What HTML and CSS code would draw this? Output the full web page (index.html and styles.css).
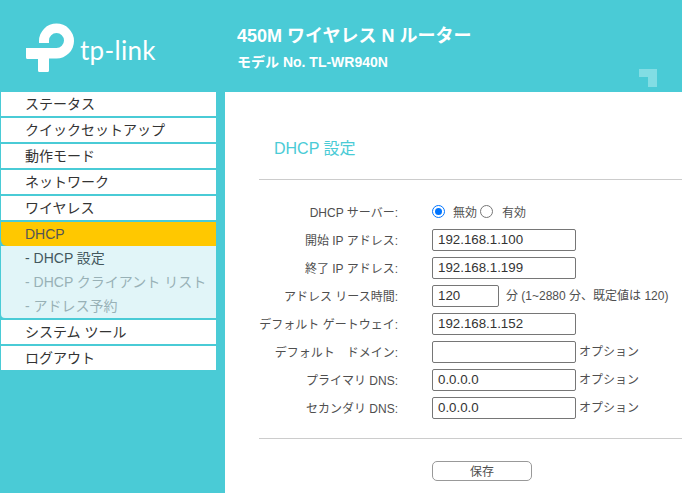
FILE: index.html
```html
<!DOCTYPE html>
<html lang="ja">
  <head>
    <meta charset="UTF-8" />
    <title>TL-WR940N</title>
    <link rel="stylesheet" href="styles.css">
  </head>

  <body>
    <header class="topbar">
      <div class="logo">
        <svg class="logo-mark" width="52" height="52" viewBox="25 22 52 52">
          <path fill="#fff" d="M39 43 V41 A17.500 17.500 0 1 1 56.500 58.500 H49 V70.500 Q49 72 47.500 72 H39.500 Q38 72 38 70.500 V59 H27.500 Q26 59 26 57.500 V48 H56.500 A7.500 7.500 0 1 0 49 40.500 V43 Z" />
        </svg>
        <span class="logo-text">tp-link</span>
      </div>
      <div class="model">
        <h1>450M ワイヤレス N ルーター</h1>
        <p>モデル No. TL-WR940N</p>
      </div>
      <svg class="corner" width="18" height="18" viewBox="0 0 18 18">
        <path fill="#82dde4" d="M0 0 H18 V18 H9 V8 H0 Z" />
      </svg>
    </header>

    <div class="page">
      <nav class="menu">
        <a class="item">ステータス</a>
        <a class="item">クイックセットアップ</a>
        <a class="item">動作モード</a>
        <a class="item">ネットワーク</a>
        <a class="item">ワイヤレス</a>
        <div class="group">
          <a class="item valgt">DHCP</a>
          <div class="sub">
            <a class="current">- DHCP 設定</a>
            <a>- DHCP クライアント リスト</a>
            <a>- アドレス予約</a>
          </div>
        </div>
        <a class="item">システム ツール</a>
        <a class="item">ログアウト</a>
      </nav>

      <main class="content">
        <h2>DHCP 設定</h2>
        <hr />
        <form class="settings">
          <div class="row">
            <label>DHCP サーバー:</label>
            <div class="radios">
              <span class="radio on"></span><span class="radio-label">無効</span>
              <span class="radio"></span><span class="radio-label second">有効</span>
            </div>
          </div>
          <div class="row">
            <label>開始 IP アドレス:</label>
            <div class="field">192.168.1.100</div>
          </div>
          <div class="row">
            <label>終了 IP アドレス:</label>
            <div class="field">192.168.1.199</div>
          </div>
          <div class="row">
            <label>アドレス リース時間:</label>
            <div class="field short">120</div>
            <span class="hint wide">分 (1~2880 分、既定値は 120)</span>
          </div>
          <div class="row">
            <label>デフォルト ゲートウェイ:</label>
            <div class="field">192.168.1.152</div>
          </div>
          <div class="row">
            <label>デフォルト　ドメイン:</label>
            <div class="field"></div>
            <span class="hint">オプション</span>
          </div>
          <div class="row">
            <label>プライマリ DNS:</label>
            <div class="field">0.0.0.0</div>
            <span class="hint">オプション</span>
          </div>
          <div class="row">
            <label>セカンダリ DNS:</label>
            <div class="field">0.0.0.0</div>
            <span class="hint">オプション</span>
          </div>
        </form>
        <hr class="bottom" />
        <div class="actions">
          <button type="button">保存</button>
        </div>
      </main>
    </div>
  </body>
</html>
```

FILE: styles.css
```css
html,
body {
  height: 100%;
}

body {
  margin: 0;
  background-color: #4acbd6;
  font-family: "Liberation Sans", "Noto Sans CJK JP", sans-serif;
  overflow: hidden;
}

.topbar {
  position: relative;
  display: flex;
  height: 92px;
}

.logo {
  display: flex;
  width: 237px;
  padding: 22px 0 0 25px;
  box-sizing: border-box;
}

.logo-text {
  margin: 12px 0 0 3px;
  height: 30px;
  color: #fff;
  font-family: "Lato", sans-serif;
  font-size: 26px;
  font-weight: 400;
  letter-spacing: 0.3px;
}

.model {
  color: #fff;
  font-weight: bold;
}

.model h1 {
  margin: 25px 0 0;
  font-size: 18px;
  line-height: 22px;
}

.model p {
  margin: 6px 0 0;
  font-size: 14px;
  line-height: 18px;
}

.corner {
  position: absolute;
  right: 25px;
  bottom: 5px;
}

.page {
  display: flex;
  height: 401px;
}

.menu {
  width: 215px;
  margin: 0 9px 0 1px;
  display: flex;
  flex-direction: column;
  gap: 2px;
  font-size: 14px;
  color: #333;
}

.item {
  display: block;
  height: 24px;
  line-height: 24px;
  padding-left: 24px;
  background-color: #fff;
}

.valgt {
  background-color: #ffc800;
  color: #555;
  border-bottom-left-radius: 6px;
}

.sub {
  background-color: #e1f5f8;
  border-bottom-left-radius: 4px;
}

.sub a {
  display: block;
  height: 24px;
  line-height: 24px;
  padding-left: 24px;
  color: #98b1b6;
}

.sub .current {
  color: #43585e;
}

.content {
  flex: 1;
  background-color: #fff;
  padding: 45px 0 0 34px;
  color: #4f4f4f;
  font-size: 12px;
}

.content h2 {
  margin: 0 0 18px 15px;
  color: #4acbd6;
  font-size: 16px;
  font-weight: normal;
  line-height: 24px;
}

hr {
  margin: 0;
  border: 0;
  border-top: 1px solid #ccc;
}

.settings {
  padding-top: 18px;
}

.row {
  display: flex;
  align-items: center;
  height: 28px;
}

.row label {
  width: 139px;
  margin-right: 34px;
  padding-bottom: 2px;
  text-align: right;
  white-space: nowrap;
}

.radios {
  display: flex;
  align-items: center;
  padding-bottom: 2px;
}

.radio {
  width: 11px;
  height: 11px;
  border: 1px solid #767676;
  border-radius: 50%;
}

.radio.on {
  position: relative;
  border-color: #0075ff;
}

.radio.on::after {
  content: "";
  position: absolute;
  top: 2px;
  left: 2px;
  width: 7px;
  height: 7px;
  border-radius: 50%;
  background-color: #0075ff;
}

.radio-label {
  margin-left: 8px;
}

.radio-label.second {
  margin-left: 9px;
}

.radio-label + .radio {
  margin-left: 3px;
}

.field {
  flex: none;
  width: 137px;
  height: 20px;
  margin-right: 2px;
  padding-left: 5px;
  border: 1px solid #767676;
  border-radius: 2px;
  color: #333;
  font-size: 13.300px;
  line-height: 20px;
}

.field.short {
  width: 60px;
}

.hint {
  margin-left: 1px;
  padding-bottom: 4px;
}

.hint.wide {
  margin-left: 5px;
}

.bottom {
  margin-top: 16px;
}

.actions {
  padding: 22px 0 0 173px;
}

.actions button {
  width: 100px;
  height: 20px;
  padding: 0 0 3px;
  background-color: #fff;
  border: 1px solid #999;
  border-radius: 5px;
  color: #4f4f4f;
  font-family: inherit;
  font-size: 12px;
}
```
